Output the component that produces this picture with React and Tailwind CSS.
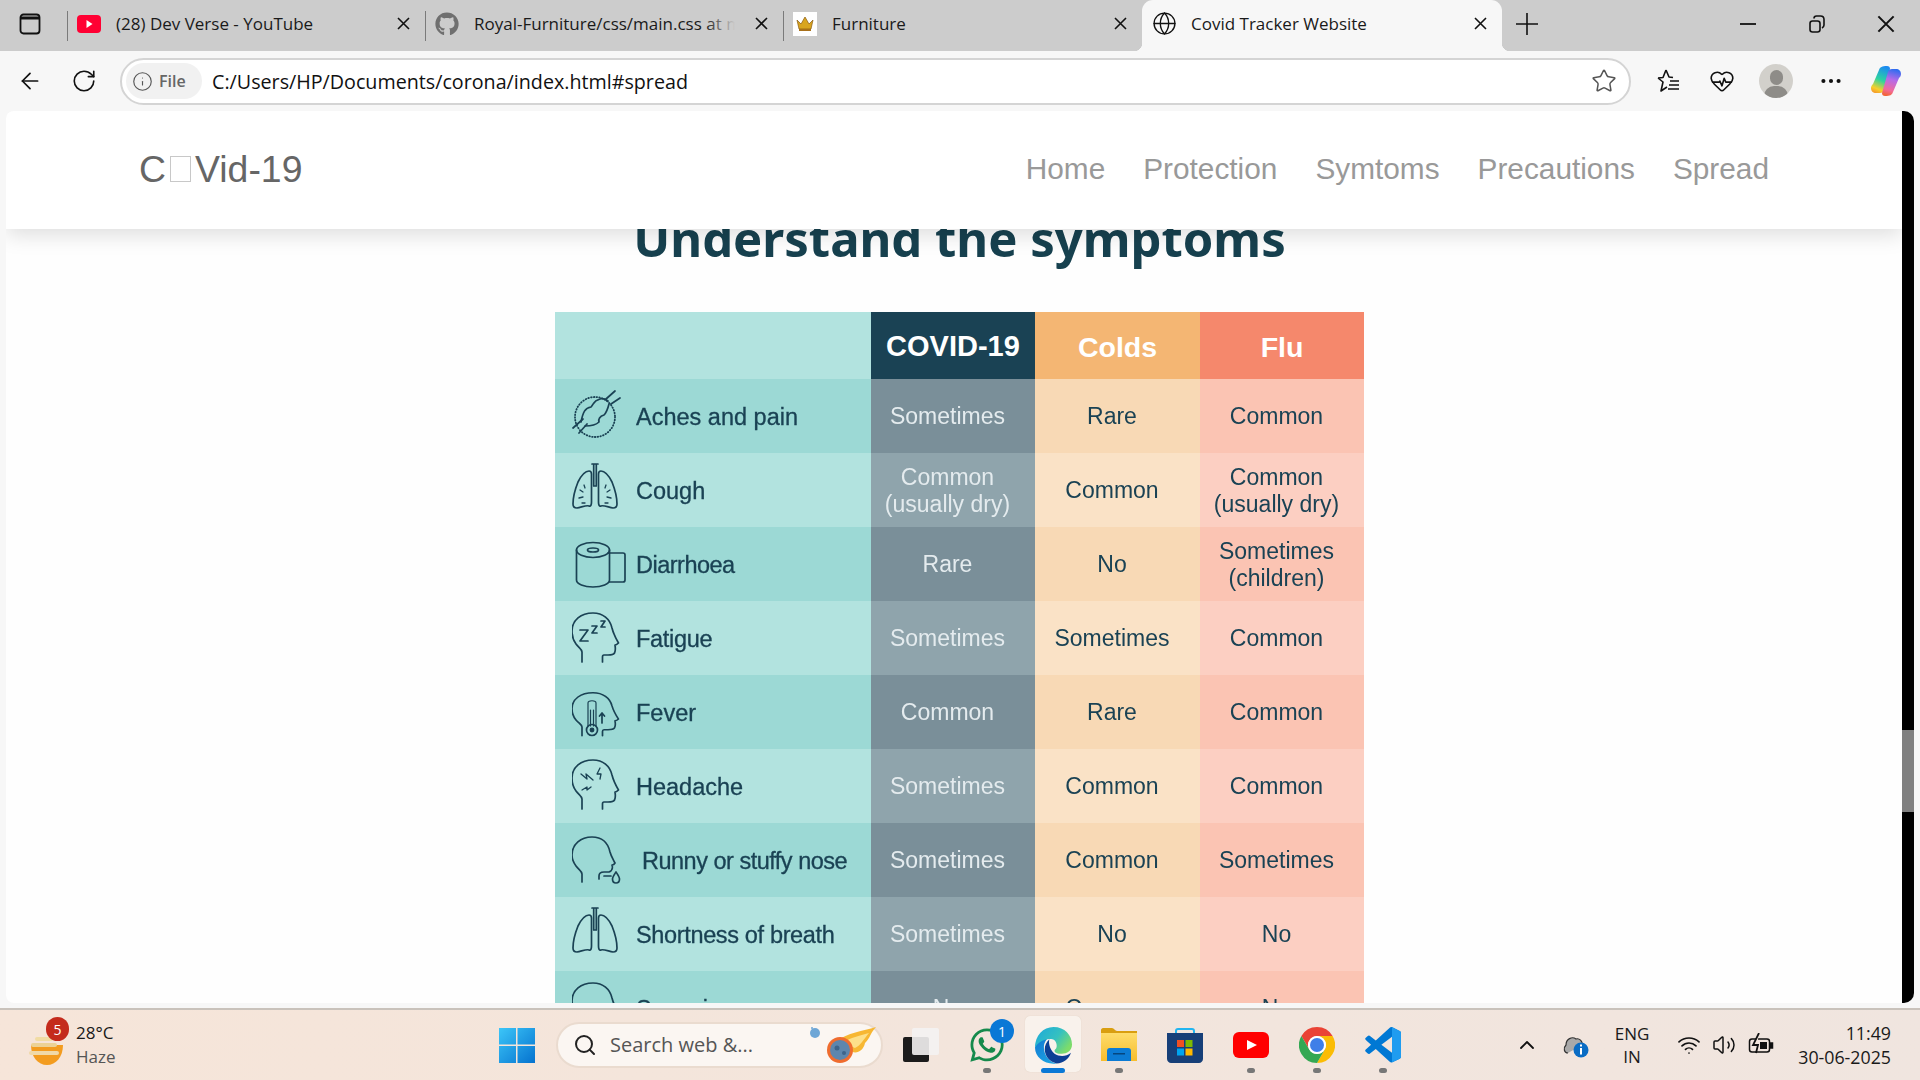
import React from "react";
import { ArrowLeft, RotateCw, Info, Star, Globe, HeartPulse, MoreHorizontal, ChevronUp, Wifi, Volume2, Search } from "lucide-react";
import { FaGithub, FaWhatsapp } from "react-icons/fa";

const XIcon = ({ s = 13, w = 1.6 }) => (
  <svg width={s} height={s} viewBox="0 0 13 13" fill="none" stroke="#111" strokeWidth={w}><path d="M1 1l11 11M12 1L1 12" /></svg>
);

const YtFav = () => (
  <svg width="24" height="18" viewBox="0 0 24 18"><rect width="24" height="18" rx="4" fill="#ff0033" /><path d="M9.5 5l6 4-6 4z" fill="#fff" /></svg>
);
const CrownFav = () => (
  <span className="w-[24px] h-[24px] bg-white flex items-center justify-center">
    <svg width="20" height="16" viewBox="0 0 20 16"><path d="M2 4l4 4 4-7 4 7 4-4-2 9H4z" fill="#d9a520" stroke="#8a5a10" strokeWidth=".7" /><rect x="4" y="13" width="12" height="2" fill="#a8701a" /></svg>
  </span>
);

const Tab = ({ icon, title, active, fade, w = "w-[358px]" }) => (
  <div className={`relative flex items-center h-[51px] pb-[4px] ${w} shrink-0 ${active ? "bg-[#f7f7f7] rounded-t-[11px]" : ""}`}>
    {!active && <span className="w-px h-[30px] mt-[4px] bg-[#7a7a7a] shrink-0" />}
    <span className={`flex items-center justify-start shrink-0 w-[28px] ${active ? "ml-[10px]" : "ml-[9px]"}`}>{icon}</span>
    <span className="ml-[11px] flex-1 min-w-0 relative overflow-hidden whitespace-nowrap text-[17px] text-[#1a1a1a]">
      {title}
      {fade && <span className="absolute right-0 top-0 bottom-0 w-[30px] bg-gradient-to-r from-transparent to-[#cccccc]" />}
    </span>
    <span className="w-[13px] shrink-0 ml-[20px] mr-[15px] flex"><XIcon /></span>
    {active && <span className="absolute -left-[8px] bottom-0 w-[8px] h-[8px] bg-[radial-gradient(circle_at_0_0,transparent_8px,#f7f7f7_8.5px)]" />}
    {active && <span className="absolute -right-[8px] bottom-0 w-[8px] h-[8px] bg-[radial-gradient(circle_at_100%_0,transparent_8px,#f7f7f7_8.5px)]" />}
  </div>
);

const Head = ({ t = "translate(0,0)" }) => (
  <path transform={t} d="M10 60V50C10 47 7 46 4 42C1 38 0 34 0 29C0 18 9 11 21 11C31 11 38 17 40 26C41 30 43 35 46.5 41C45 42.5 44 43 43 43C43.5 46 43.5 49 42.5 51C41.5 53 39 53 36 53H32C31 53 30.5 54 30.5 55V60" />
);
const Lung = () => (
  <path d="M17 17C12 17 9 22 6 28C2 38 1 44 1 50C1 53 3 54 5 54C10 53 15 51 17 52C19 53 19.5 50 19.5 48V20C19.5 18 18.5 17 17 17Z" />
);
const Lungs = ({ spots }) => (
  <>
    <Lung />
    <g transform="translate(46,0) scale(-1,1)"><Lung /></g>
    <path d="M20 10H26M21.7 10V32M24.3 10V32M21.7 32H24.3" />
    {spots && <path strokeWidth="1.3" d="M8 36l3 2M12 31l1 3M7 44l4-1M10 49h3M38 36l-3 2M34 31l-1 3M39 44l-4-1M36 49h-3" />}
  </>
);

const icons = {
  aches: (
    <>
      <circle cx="23" cy="37" r="20" strokeDasharray="0.6 2.2" strokeWidth="1.8" />
      <path d="M9 42C11 32 13 28 19 27C22 24 21 21 28 19C31 18 33 19 36 21M13 46C20 46 24 45 27 42C26 38 29 36 32 35C35 32 36 28 37 24" />
      <path d="M34 19l9-8M39 24l9-6M1 48l10-9M7 53l8-9" />
    </>
  ),
  cough: <Lungs spots />,
  diarrhoea: (
    <>
      <ellipse cx="21" cy="22" rx="16.5" ry="7.5" />
      <ellipse cx="21" cy="22" rx="5.5" ry="2" />
      <path d="M4.5 22V52C4.5 56 12 59 21 59C30 59 37.5 56 37.5 52V22" />
      <path d="M36 25H51C52 25 53 26 53 27V52C53 53 52 54 51 54H37.5" />
    </>
  ),
  fatigue: (
    <>
      <Head />
      <path d="M8 28H16L8 39H16M20 24H25L20 31H25M29 19H33L29 25H33" />
    </>
  ),
  fever: (
    <>
      <g transform="translate(0,7) scale(1,.88)"><Head /></g>
      <path d="M16 50V27C16 24 24 24 24 27V50M18.5 34V50M21.5 34V50" strokeWidth="1.2" />
      <circle cx="20" cy="54" r="5.5" />
      <circle cx="20" cy="54" r="1.6" fill="#1a4254" />
      <path d="M30 47V37M27.5 40L30 37L32.5 40" />
    </>
  ),
  headache: (
    <>
      <g transform="translate(0,-1) scale(1,1)"><Head /></g>
      <path d="M9 24l6 5-1-5 7 6M28 18l-3 6 4 0-1 5M10 40l5-3 0 3 4-3" strokeWidth="1.3" />
    </>
  ),
  runny: (
    <>
      <path d="M10 58V50C10 47 7 46 4 42C1 38 0 34 0 31C0 20 9 13 20 13C30 13 36 19 38 28C39 32 41 35 43 39C42 41 41 41 40 41C41 44 40 47 37 48H32C28 48 27 50 27 52V55" />
      <path d="M32 52H39" />
      <path d="M44 48C46 51 47.5 53 47.5 55C47.5 58 45.5 59 44 59C42.5 59 40.5 58 40.5 55C40.5 53 42 51 44 48Z" />
    </>
  ),
  shortness: <Lungs />,
  sneezing: <Head />,
};

const rows = [
  ["aches", "Aches and pain", ["Sometimes"], ["Rare"], ["Common"], "ml-[10px]"],
  ["cough", "Cough", ["Common", "(usually dry)"], ["Common"], ["Common", "(usually dry)"], "ml-[10px]"],
  ["diarrhoea", "Diarrhoea", ["Rare"], ["No"], ["Sometimes", "(children)"], "ml-[10px] tracking-[-0.5px]"],
  ["fatigue", "Fatigue", ["Sometimes"], ["Sometimes"], ["Common"], "ml-[10px] tracking-[-0.3px]"],
  ["fever", "Fever", ["Common"], ["Rare"], ["Common"], "ml-[10px]"],
  ["headache", "Headache", ["Sometimes"], ["Common"], ["Common"], "ml-[10px]"],
  ["runny", "Runny or stuffy nose", ["Sometimes"], ["Common"], ["Sometimes"], "ml-[16px] tracking-[-0.5px]"],
  ["shortness", "Shortness of breath", ["Sometimes"], ["No"], ["No"], "ml-[10px] tracking-[-0.35px]"],
  ["sneezing", "Sneezing", ["No"], ["Common"], ["No"], "ml-[10px]"],
];

const Cell = ({ lines, cls }) => (
  <div className={`flex flex-col items-center justify-center pr-[11px] pt-[1px] leading-[27px] ${cls}`}>
    {lines.map((l) => <span key={l} className="whitespace-nowrap">{l}</span>)}
  </div>
);

const SymptomTable = () => (
  <div className="grid grid-cols-[316px_164px_165px_164px] text-[23px] text-[#1a4254] font-['Liberation_Sans',Arial,sans-serif] blur-[0.4px]">
    <div className="h-[67px] bg-[#b2e3df]" />
    <div className="h-[67px] pt-[3px] bg-[#1a4254] text-white font-bold text-[29px] flex items-center justify-center">COVID-19</div>
    <div className="h-[67px] pt-[3px] bg-[#f4b673] text-white font-bold text-[28.5px] flex items-center justify-center">Colds</div>
    <div className="h-[67px] pt-[3px] bg-[#f5886c] text-white font-bold text-[28.5px] flex items-center justify-center">Flu</div>
    {rows.map(([ic, label, a, b, c, tx], i) => {
      const dark = i % 2 === 0;
      return (
        <React.Fragment key={label}>
          <div className={`h-[74px] flex items-center pl-[17px] ${dark ? "bg-[#9cd9d5]" : "bg-[#b2e3df]"}`}>
            <svg width="54" height="74" viewBox="0 0 54 74" fill="none" stroke="#1a4254" strokeWidth="1.7" strokeLinecap="round" strokeLinejoin="round" className="shrink-0 mt-[2px]">{icons[ic]}</svg>
            <span className={`whitespace-nowrap text-[23.5px] pt-[3px] [-webkit-text-stroke:0.3px_#1a4254] ${tx}`}>{label}</span>
          </div>
          <Cell lines={a} cls={`text-[#e4ebee] ${dark ? "bg-[#7a8f99]" : "bg-[#8fa4ac]"}`} />
          <Cell lines={b} cls={dark ? "bg-[#f8d9b5]" : "bg-[#fae2c6]"} />
          <Cell lines={c} cls={dark ? "bg-[#fbc4b3]" : "bg-[#fccfc2]"} />
        </React.Fragment>
      );
    })}
  </div>
);

const Dot = () => <span className="absolute bottom-[7px] left-1/2 -translate-x-1/2 w-[8px] h-[5px] rounded-full bg-[#777]" />;

const TaskCell = ({ children, dot, active }) => (
  <div className="relative w-[66px] h-full flex items-center justify-center shrink-0">
    {active && <span className="absolute left-[5px] top-[6px] w-[56px] h-[56px] rounded-[5px] bg-[#f9f2ec] shadow-[0_0_1px_#d8c8b8]" />}
    <span className="relative flex">{children}</span>
    {dot && <Dot />}
    {active && <span className="absolute bottom-[7px] left-1/2 -translate-x-1/2 w-[24px] h-[5px] rounded-full bg-[#0a78d6]" />}
  </div>
);

const WinLogo = () => (
  <svg width="36" height="36" viewBox="0 0 36 36">
    <defs><linearGradient id="w1" x1="0" y1="0" x2="1" y2="1"><stop offset="0" stopColor="#3cc6f8" /><stop offset="1" stopColor="#0572cf" /></linearGradient></defs>
    <path d="M0 1h17v16.500H0zM18.500 1H36v16.500H18.500zM0 19h17v17H0zM18.500 19H36v17H18.500z" fill="url(#w1)" />
  </svg>
);
const Comet = () => (
  <svg width="68" height="40" viewBox="0 0 68 40">
    <circle cx="6" cy="8" r="5" fill="#6ea6d6" />
    <circle cx="3" cy="3" r="1" fill="#6ea6d6" />
    <path d="M28 16C38 8 54 6 67 2C60 10 62 12 56 18C54 28 44 30 40 24Z" fill="#f7b733" />
    <path d="M34 18C42 12 50 11 60 8C54 15 52 20 46 23Z" fill="#fde08a" />
    <circle cx="31" cy="25" r="13" fill="#ef6c2f" />
    <circle cx="31" cy="25" r="10" fill="#5d86ad" />
    <circle cx="28" cy="23" r="2.500" fill="#3d648a" /><circle cx="35" cy="28" r="2" fill="#3d648a" />
  </svg>
);
const Edge = () => (
  <svg width="37" height="37" viewBox="0 0 36 36">
    <defs>
      <linearGradient id="e1" x1="0" y1="0" x2="1" y2=".6"><stop offset="0" stopColor="#1ba8dc" /><stop offset=".6" stopColor="#35c1c0" /><stop offset="1" stopColor="#7ddc6a" /></linearGradient>
      <linearGradient id="e2" x1="0" y1="0" x2=".6" y2="1"><stop offset="0" stopColor="#1174d0" /><stop offset="1" stopColor="#1ba1e2" /></linearGradient>
    </defs>
    <path d="M0 20C2 9 9 6 15 9C9 13 8 18 9 23C10 28 14 34 21 35.500C10 37 0 30 0 20Z" fill="url(#e2)" />
    <path d="M21 35.500C14 34 9.500 28 9.500 22C9.500 18 11 15 14 12C13 15 14 22 19 26C24 29 30 29 35 25C33 31 28 35 21 35.500Z" fill="#0c3f94" />
    <path d="M18 0C29 0 36 8 36 17C36 23 31 26 26 26C22 26 19 25 19 23C19 22 20 22 20.500 21C22 19 21 13 17 12C10 10.500 3 15 0 20C0 8 8 0 18 0Z" fill="url(#e1)" />
  </svg>
);
const Folder = () => (
  <svg width="36" height="34" viewBox="0 0 36 34">
    <path d="M0 2C0 1 1 0 2 0H11C13 0 14 3 16 3H36V8H0Z" fill="#d99e10" />
    <path d="M0 5H36V33H0Z" fill="url(#f1)" />
    <defs><linearGradient id="f1" x1="0" y1="0" x2="0" y2="1"><stop offset="0" stopColor="#fedc6b" /><stop offset="1" stopColor="#f7bd2c" /></linearGradient></defs>
    <path d="M6 33V23C6 21 7 20 9 20H27C29 20 30 21 30 23V33Z" fill="#0c7bd4" />
    <rect x="12" y="25" width="12" height="1.500" fill="#05467f" />
  </svg>
);
const Store = () => (
  <svg width="36" height="35" viewBox="0 0 36 35">
    <path d="M9 8V3C9 2 10 1 11 1H25C26 1 27 2 27 3V8" fill="none" stroke="#22b5f0" strokeWidth="2" />
    <path d="M0 5H36V31C36 33 34 35 32 35H4C2 35 0 33 0 31Z" fill="#173f78" />
    <rect x="10" y="12" width="7" height="7" fill="#f25022" /><rect x="18.500" y="12" width="7" height="7" fill="#7fba00" />
    <rect x="10" y="20.500" width="7" height="7" fill="#00a4ef" /><rect x="18.500" y="20.500" width="7" height="7" fill="#ffb900" />
  </svg>
);
const Yt = () => (
  <svg width="36" height="26" viewBox="0 0 36 26"><rect width="36" height="26" rx="6" fill="#ff0000" /><path d="M14 8l10 5-10 5z" fill="#fff" /></svg>
);
const Chrome = () => (
  <svg width="36" height="36" viewBox="0 0 36 36">
    <path d="M18 0A18 18 0 0 1 33.600 9H18A9 9 0 0 0 10.200 22.500L2.400 9A18 18 0 0 1 18 0Z" fill="#ea4335" />
    <path d="M33.600 9A18 18 0 0 1 18 36L25.800 22.500A9 9 0 0 0 18 9Z" fill="#fbbc04" />
    <path d="M2.400 9L10.200 22.500A9 9 0 0 0 25.800 22.500L18 36A18 18 0 0 1 2.400 9Z" fill="#34a853" />
    <circle cx="18" cy="18" r="9" fill="#fff" /><circle cx="18" cy="18" r="7" fill="#3f7fe8" />
  </svg>
);
const VsCode = () => (
  <svg width="36" height="36" viewBox="0 0 100 100">
    <path fill="#0078d4" d="M96.460 10.800 75.860.87a6.230 6.230 0 0 0-7.100 1.200L29.900 37.500 13 24.600a4.160 4.160 0 0 0-5.320.24L2.200 29.800a4.170 4.170 0 0 0 0 6.160L16.800 49.300 2.200 62.600a4.170 4.170 0 0 0 0 6.160l5.500 5a4.160 4.160 0 0 0 5.310.24L29.900 61.100l38.860 35.450a6.220 6.220 0 0 0 7.100 1.200l20.600-9.900a6.250 6.250 0 0 0 3.540-5.630V16.400a6.250 6.250 0 0 0-3.540-5.630ZM75 71.200 45.500 49.300 75 27.400Z" />
    <path fill="#1f9cf0" d="M75 .5a6 6 0 0 1 .86.37l20.600 9.900A6.250 6.250 0 0 1 100 16.400v66.200a6.250 6.250 0 0 1-3.540 5.630l-20.600 9.900a6 6 0 0 1-.86.37Z" />
  </svg>
);
const Copilot = () => (
  <svg width="30" height="32" viewBox="0 0 30 32">
    <defs>
      <linearGradient id="c1" x1=".6" y1="0" x2=".3" y2="1"><stop offset="0" stopColor="#1c8cf0" /><stop offset=".5" stopColor="#2dd49f" /><stop offset=".85" stopColor="#f7d02c" /><stop offset="1" stopColor="#f5a02c" /></linearGradient>
      <linearGradient id="c2" x1=".6" y1="0" x2=".4" y2="1"><stop offset="0" stopColor="#2f6df0" /><stop offset=".4" stopColor="#b66be8" /><stop offset=".8" stopColor="#f26a9a" /><stop offset="1" stopColor="#f2653a" /></linearGradient>
    </defs>
    <path d="M16 1C18 1 19 2 19 4L13 25C12.500 27 11 28 9 28H5C2 28 0 26 0 23C0 21 1 20 2 19L8 5C9 2 11 1 16 1Z" fill="url(#c1)" />
    <path d="M14 31C12 31 11 30 11 28L17 7C17.500 5 19 4 21 4H25C28 4 30 6 30 9C30 11 29 12 28 13L22 27C21 30 19 31 14 31Z" fill="url(#c2)" />
  </svg>
);

const Taskbar = () => (
  <div className="h-[72px] shrink-0 flex items-center border-t-2 border-[#c9c2bb] bg-gradient-to-r from-[#f6e5d9] to-[#f0e5df] font-['Open_Sans',sans-serif]">
    <div className="relative w-[484px] h-full shrink-0 flex items-center pl-[29px]">
      <svg width="36" height="32" viewBox="0 0 36 32" className="mt-[8px]">
        <path d="M2 12H34C34 24 27 32 18 32C9 32 2 24 2 12Z" fill="#f39c1f" />
        <rect x="6" y="4" width="18" height="4" rx="2" fill="#f1dca4" />
        <rect x="2" y="10" width="26" height="4" rx="2" fill="#ecd295" />
        <rect x="0" y="18" width="30" height="4" rx="2" fill="#f0d9a8" />
      </svg>
      <span className="absolute left-[46px] top-[7px] w-[23px] h-[24px] rounded-full bg-[#c42b1c] text-white text-[14px] flex items-center justify-center">5</span>
      <div className="ml-[11px] flex flex-col leading-[24px] text-[17px]">
        <span className="text-[#1a1a1a]">28°C</span>
        <span className="text-[#555]">Haze</span>
      </div>
    </div>
    <TaskCell><WinLogo /></TaskCell>
    <div className="ml-[6px] mr-[5px] w-[327px] h-[46px] shrink-0 rounded-full bg-[#fbf6f2] border-2 border-[#eadbcf] flex items-center pl-[15px] pr-[4px]">
      <Search size={24} strokeWidth={2} color="#222" />
      <span className="ml-[13px] text-[20px] text-[#555] flex-1 whitespace-nowrap">Search web &amp;...</span>
      <Comet />
    </div>
    <TaskCell>
      <svg width="36" height="34" viewBox="0 0 36 34"><rect x="0" y="9" width="26" height="25" rx="2" fill="#1b1b1b" /><rect x="9" y="0" width="27" height="27" rx="2" fill="#f4f2f2" fillOpacity=".9" /></svg>
    </TaskCell>
    <TaskCell dot>
      <FaWhatsapp size={38} color="#158a4c" />
      <span className="absolute -right-[8px] -top-[7px] w-[24px] h-[24px] rounded-full bg-[#0a78d6] text-white text-[14px] flex items-center justify-center">1</span>
    </TaskCell>
    <TaskCell active><Edge /></TaskCell>
    <TaskCell dot><Folder /></TaskCell>
    <TaskCell><Store /></TaskCell>
    <TaskCell dot><Yt /></TaskCell>
    <TaskCell dot><Chrome /></TaskCell>
    <TaskCell dot><VsCode /></TaskCell>
    <span className="ml-[99px] w-[24px] shrink-0 flex justify-center"><ChevronUp size={24} strokeWidth={1.8} color="#111" /></span>
    <span className="ml-[24px] w-[26px] h-[26px] shrink-0 relative flex">
      <svg width="26" height="26" viewBox="0 0 26 26"><path d="M5 21C1 21 0 16 3 13C3 7 9 4 13 7C16 6 20 9 19 13" fill="#a9a9a9" stroke="#333" strokeWidth="1.2" /><circle cx="18" cy="18" r="7.500" fill="#0a6cc4" /><rect x="17" y="16" width="2" height="6.500" fill="#fff" /><rect x="17" y="12.500" width="2" height="2" fill="#fff" /></svg>
    </span>
    <div className="ml-[21px] w-[44px] shrink-0 flex flex-col items-center text-[17px] leading-[23px] text-[#1a1a1a]"><span>ENG</span><span>IN</span></div>
    <span className="ml-[23px] w-[24px] shrink-0 flex"><Wifi size={24} strokeWidth={1.7} color="#111" /></span>
    <span className="ml-[11px] w-[24px] shrink-0 flex"><Volume2 size={24} strokeWidth={1.5} color="#111" /></span>
    <span className="ml-[12px] w-[26px] shrink-0 flex">
      <svg width="26" height="24" viewBox="0 0 26 24" fill="none" stroke="#111" strokeWidth="1.500"><rect x="1.500" y="6" width="20" height="13" rx="2.500" /><rect x="22" y="10" width="2.500" height="5" fill="#111" /><path d="M11 0L5 12H10L8 20" strokeWidth="1.800" fill="#f3e5dc" /><rect x="12" y="9" width="7" height="7" fill="#111" stroke="none" /></svg>
    </span>
    <div className="flex-1 flex flex-col items-end pr-[29px] text-[17.8px] leading-[24px] text-[#1a1a1a]"><span>11:49</span><span>30-06-2025</span></div>
  </div>
);

const FavIcon = () => (
  <svg width="26" height="26" viewBox="0 0 26 26" fill="none" stroke="#111" strokeWidth="1.600" strokeLinejoin="round"><path d="M11 2l3 7 4 .5M3 10l5 4-2 9 6-4M3 10l5-.5L11 2" /><path d="M15 13h9M14 17h10M13 21h11" /></svg>
);

export default function App() {
  return (
    <div className="w-[1920px] h-[1080px] flex flex-col overflow-hidden bg-[#f7f7f7] font-['Open_Sans',sans-serif]">
      <div className="h-[51px] shrink-0 bg-[#cccccc] flex items-center">
        <span className="w-[67px] shrink-0 flex justify-center pr-[7px] mb-[3px]">
          <svg width="22" height="22" viewBox="0 0 22 22" fill="none" stroke="#111" strokeWidth="1.800"><rect x="1.500" y="1.500" width="19" height="19" rx="3" /><path d="M1.500 5h19" strokeWidth="3" /></svg>
        </span>
        <Tab icon={<YtFav />} title="(28) Dev Verse - YouTube" />
        <Tab icon={<FaGithub size={24} color="#6f6f6f" />} title="Royal-Furniture/css/main.css at main" fade />
        <Tab w="w-[359px]" icon={<CrownFav />} title="Furniture" />
        <Tab w="w-[360px]" active icon={<Globe size={25} strokeWidth={1.3} color="#111" />} title="Covid Tracker Website" />
        <span className="ml-[13px] w-[24px] shrink-0 flex mb-[4px]">
          <svg width="24" height="24" viewBox="0 0 24 24" stroke="#111" strokeWidth="1.600"><path d="M12 1v22M1 12h22" /></svg>
        </span>
        <span className="ml-[201px] w-[16px] flex mb-[3px]"><svg width="16" height="4" viewBox="0 0 16 4"><path d="M0 2h16" stroke="#111" strokeWidth="1.800" /></svg></span>
        <span className="ml-[52px] w-[18px] flex mb-[3px]">
          <svg width="18" height="18" viewBox="0 0 18 18" fill="none" stroke="#111" strokeWidth="1.600"><rect x="2" y="6" width="10" height="11" rx="2.500" /><path d="M6 3.500C6 2 7 1 8.500 1H12.500C15 1 16 3 16 4.500V10C16 11.500 15 12.500 14 13" /></svg>
        </span>
        <span className="ml-[51px] flex mb-[3px]"><XIcon s={18} w={1.5} /></span>
      </div>

      <div className="h-[60px] shrink-0 flex items-center">
        <span className="ml-[17px] w-[26px] flex"><ArrowLeft size={28} strokeWidth={1.6} color="#111" /></span>
        <span className="ml-[28px] w-[26px] flex"><RotateCw size={26} strokeWidth={1.5} color="#111" /></span>
        <div className="ml-[23px] w-[1511px] h-[47px] shrink-0 rounded-full border-2 border-[#d4d4d4] bg-white flex items-center pl-[4px] pr-[12px]">
          <span className="w-[76px] h-[36px] rounded-full bg-[#f1f1f1] flex items-center pl-[6px] shrink-0">
            <Info size={21} strokeWidth={1.3} color="#555" />
            <span className="ml-[6px] text-[16px] font-semibold text-[#666]">File</span>
          </span>
          <span className="ml-[10px] pt-[1px] flex-1 text-[19.7px] text-[#111] whitespace-nowrap">C:/Users/HP/Documents/corona/index.html#spread</span>
          <Star size={26} strokeWidth={1.4} color="#555" />
        </div>
        <span className="ml-[24px] flex"><FavIcon /></span>
        <span className="ml-[28px] flex"><HeartPulse size={26} strokeWidth={1.5} color="#111" /></span>
        <span className="ml-[24px] w-[34px] h-[34px] rounded-full bg-[#d2d0cb] relative overflow-hidden flex justify-center shrink-0">
          <span className="absolute top-[6px] w-[13px] h-[15px] rounded-full bg-[#8e8c88]" />
          <span className="absolute top-[22px] w-[24px] h-[20px] rounded-full bg-[#8e8c88]" />
        </span>
        <span className="ml-[25px] flex"><MoreHorizontal size={26} strokeWidth={1.800} color="#111" /></span>
        <span className="ml-[27px] flex"><Copilot /></span>
      </div>

      <div className="flex-1 min-h-0 flex pl-[6px] pr-[6px] pb-[5px]">
        <div className="relative flex-1 min-w-0 overflow-hidden bg-[#fefefe] rounded-l-[8px]">
          <nav className="absolute inset-x-0 top-0 h-[118px] z-10 bg-white shadow-[0_6px_20px_rgba(0,0,0,0.13)] flex items-center justify-between pl-[133px] pr-[133px] pb-[2px] font-['Liberation_Sans',Arial,sans-serif]">
            <span className="text-[37.4px] text-[#666] flex items-center whitespace-nowrap">
              C<span className="inline-block w-[21px] h-[26px] border border-[#c8c8c8] mx-[4px]" />Vid-19
            </span>
            <div className="flex gap-[38px] text-[29.8px] text-[#999]">
              <span>Home</span><span>Protection</span><span>Symtoms</span><span>Precautions</span><span>Spread</span>
            </div>
          </nav>
          <div className="ml-[549px] w-[809px] pt-[92px]">
            <h2 className="h-[109px] text-center whitespace-nowrap text-[49px] leading-[70px] font-bold text-[#17414f] font-['Noto_Sans',sans-serif]">Understand the symptoms</h2>
            <SymptomTable />
          </div>
        </div>
        <div className="w-[12px] shrink-0 bg-black rounded-r-[10px] overflow-hidden">
          <div className="mt-[619px] h-[82px] bg-[#808080]" />
        </div>
      </div>
      <Taskbar />
    </div>
  );
}
